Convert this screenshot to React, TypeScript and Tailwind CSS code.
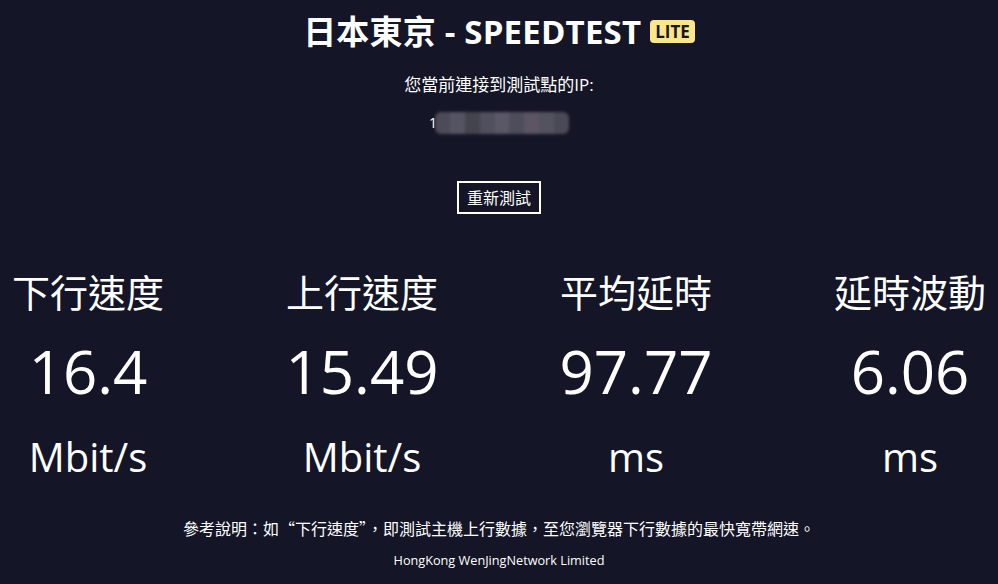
import React from 'react';

const stats = [
  { label: '下行速度', value: '16.4', unit: 'Mbit/s' },
  { label: '上行速度', value: '15.49', unit: 'Mbit/s' },
  { label: '平均延時', value: '97.77', unit: 'ms' },
  { label: '延時波動', value: '6.06', unit: 'ms' },
];

const blur = ['#4b4b5a', '#545463', '#44444f', '#50505e', '#5a5866', '#4e4d5b', '#5c5563', '#53525f', '#4a4a57'];

export default function App() {
  return (
    <div
      className="w-full h-[584px] bg-[#141526] text-white flex flex-col items-center overflow-hidden"
      style={{ fontFamily: '"Open Sans", "Noto Sans CJK TC", sans-serif' }}
    >
      <div className="mt-[12px] flex items-center gap-[9px] h-[40px]">
        <h1 className="text-[33px] leading-[40px] font-bold tracking-[0.2px]">日本東京 - SPEEDTEST</h1>
        <span className="bg-[#fde68a] text-[#16161c] font-bold text-[17px] leading-[23px] px-[5px] rounded-[4px] mt-[-2px]">
          LITE
        </span>
      </div>

      <div className="mt-[22px] text-[17px] leading-[22px]">您當前連接到測試點的IP:</div>

      <div className="mt-[16px] h-[22px] flex items-center">
        <span className="text-[14px] leading-none mr-[-2px] z-10">1</span>
        <div className="flex h-[22px] w-[134px] rounded-[6px] overflow-hidden blur-[1.5px]">
          {blur.map((c, i) => (
            <div key={i} className="flex-1" style={{ backgroundColor: c }} />
          ))}
        </div>
      </div>

      <button className="mt-[47px] border-2 border-white px-[8px] h-[33px] text-[16px] leading-none bg-transparent text-white">
        重新測試
      </button>

      <div className="mt-[55px] w-full flex justify-center">
        {stats.map((s) => (
          <div key={s.label} className="w-[274px] shrink-0 flex flex-col items-center">
            <div className="text-[38px] leading-[46px]">{s.label}</div>
            <div className="mt-[20px] text-[60px] leading-[72px]">{s.value}</div>
            <div className="mt-[26px] text-[40px] leading-[48px]">{s.unit}</div>
          </div>
        ))}
      </div>

      <div
        className="mt-[36px] text-[16px] leading-[22px]"
        style={{ fontFamily: '"Noto Sans CJK TC", "Open Sans", sans-serif' }}
      >
        參考說明：如“下行速度”，即測試主機上行數據，至您瀏覽器下行數據的最快寬帶網速。
      </div>
      <div className="mt-[13px] text-[12.7px] leading-[16px]">HongKong WenJingNetwork Limited</div>
    </div>
  );
}
